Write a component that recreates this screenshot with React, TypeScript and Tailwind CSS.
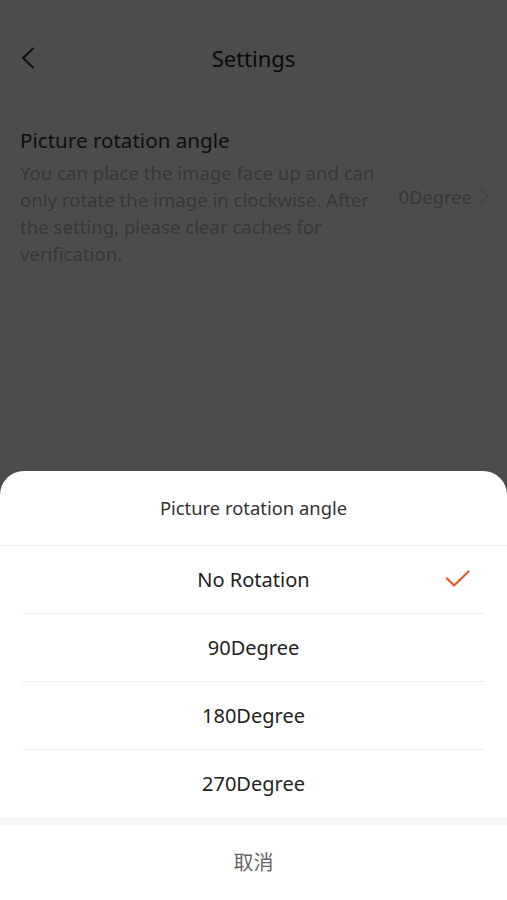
import React from 'react';

const options = ['No Rotation', '90Degree', '180Degree', '270Degree'];

export default function App() {
  const selected = 0;

  return (
    <div
      className="relative h-[900px] w-full overflow-hidden bg-white"
      style={{ fontFamily: '"Noto Sans", "Noto Sans CJK SC", sans-serif' }}
    >
      {/* page under the sheet */}
      <div className="relative flex h-12 items-center justify-center mt-[34px]">
        <svg className="absolute left-[20px] top-[13px]" width="16" height="22" viewBox="0 0 16 22" fill="none">
          <path d="M13 1.5 L3 11 L13 20.5" stroke="#333" strokeWidth="2" strokeLinecap="round" strokeLinejoin="round" />
        </svg>
        <span className="text-[22px] text-[#222]">Settings</span>
      </div>

      <div className="mt-[44px] flex items-center pl-5 pr-[18px]">
        <div className="w-[368px]">
          <div className="text-[20.6px] leading-[28px] text-[#333]">Picture rotation angle</div>
          <div className="mt-[5px] text-[18.6px] leading-[27px] text-[#b8b8b8]">
            You can place the image face up and can only rotate the image in clockwise. After the setting, please clear caches for verification.
          </div>
        </div>
        <div className="ml-auto flex items-center gap-2">
          <span className="text-[18.4px] text-[#b8b8b8]">0Degree</span>
          <svg width="9" height="16" viewBox="0 0 9 16" fill="none">
            <path d="M1.5 1.5 L7.5 8 L1.5 14.5" stroke="#d8d8d8" strokeWidth="1.5" strokeLinecap="round" strokeLinejoin="round" />
          </svg>
        </div>
      </div>

      {/* dim overlay */}
      <div className="absolute inset-0 bg-black/70" />

      {/* action sheet */}
      <div className="absolute bottom-0 left-0 right-0 flex flex-col overflow-hidden rounded-t-[24px] bg-white">
        <div className="flex h-[75px] items-center justify-center border-b border-[#ececec] text-[18.4px] text-[#333]">
          Picture rotation angle
        </div>
        {options.map((opt, i) => (
          <div key={opt} className="relative">
            {i > 0 && <div className="mx-[22px] h-px bg-[#efefef]" />}
            <div className="flex h-[67px] items-center justify-center text-[20px] text-[#222]">{opt}</div>
            {i === selected && (
              <svg className="absolute right-[36px] top-[23px]" width="26" height="20" viewBox="0 0 26 20" fill="none">
                <path d="M2 9.5 L9 16.5 L23.5 2.5" stroke="#e8572b" strokeWidth="2.2" strokeLinecap="round" strokeLinejoin="round" />
              </svg>
            )}
          </div>
        ))}
        <div className="h-2 bg-[#f5f5f5]" />
        <div className="flex h-[75px] items-center justify-center text-[20px] text-[#666]">取消</div>
      </div>
    </div>
  );
}
